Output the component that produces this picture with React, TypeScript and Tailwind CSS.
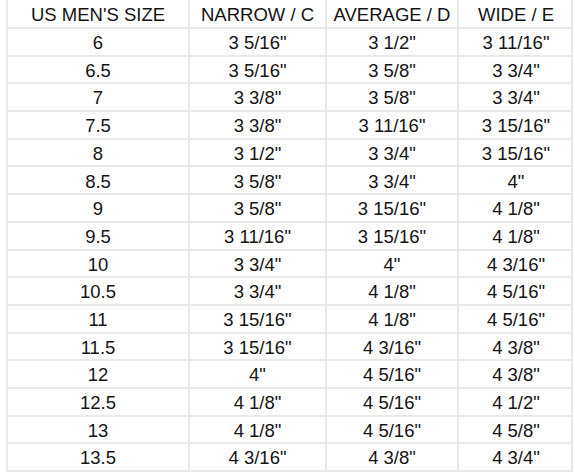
const rows: [string, string, string, string][] = [
  ['6', '3 5/16"', '3 1/2"', '3 11/16"'],
  ['6.5', '3 5/16"', '3 5/8"', '3 3/4"'],
  ['7', '3 3/8"', '3 5/8"', '3 3/4"'],
  ['7.5', '3 3/8"', '3 11/16"', '3 15/16"'],
  ['8', '3 1/2"', '3 3/4"', '3 15/16"'],
  ['8.5', '3 5/8"', '3 3/4"', '4"'],
  ['9', '3 5/8"', '3 15/16"', '4 1/8"'],
  ['9.5', '3 11/16"', '3 15/16"', '4 1/8"'],
  ['10', '3 3/4"', '4"', '4 3/16"'],
  ['10.5', '3 3/4"', '4 1/8"', '4 5/16"'],
  ['11', '3 15/16"', '4 1/8"', '4 5/16"'],
  ['11.5', '3 15/16"', '4 3/16"', '4 3/8"'],
  ['12', '4"', '4 5/16"', '4 3/8"'],
  ['12.5', '4 1/8"', '4 5/16"', '4 1/2"'],
  ['13', '4 1/8"', '4 5/16"', '4 5/8"'],
  ['13.5', '4 3/16"', '4 3/8"', '4 3/4"'],
];

const header = ["US MEN'S SIZE", 'NARROW / C', 'AVERAGE / D', 'WIDE / E'];

const widths = ['w-[182px]', 'w-[137px]', 'w-[132px]', 'w-[114px]'];

function Row({ cells, head }: { cells: string[]; head?: boolean }) {
  return (
    <div className={`flex border-b-2 border-[#e9e9e9] ${head ? 'h-[29px]' : 'h-[27.7px]'}`}>
      {cells.map((c, i) => (
        <div
          key={i}
          className={`${widths[i]} flex shrink-0 items-center justify-center pt-[3px] ${
            i < 3 ? 'border-r-2 border-[#e9e9e9]' : ''
          }`}
        >
          {c}
        </div>
      ))}
    </div>
  );
}

export default function App() {
  return (
    <div className="h-[476px] w-[575px] overflow-hidden bg-white pl-[6px] font-['Liberation_Sans',Arial,sans-serif] text-[18.5px] leading-none text-[#141414]">
      <div className="w-[567px] border-x-2 border-[#e9e9e9]">
        <Row cells={header} head />
        {rows.map((r, i) => (
          <Row key={i} cells={r} />
        ))}
      </div>
    </div>
  );
}
